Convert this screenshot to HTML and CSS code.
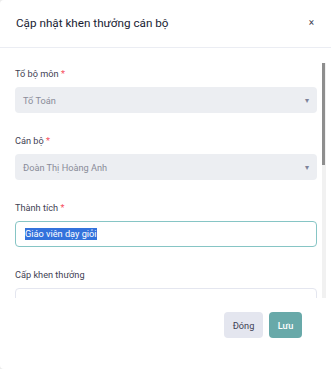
FILE: index.html
```html
<!DOCTYPE html>
<html lang="vi">
<head>
<meta charset="utf-8">
<title>Cập nhật khen thưởng cán bộ</title>
<link rel="stylesheet" href="styles.css">
</head>
<body>
<div class="modal">
  <div class="modal-header">
    <h2 class="modal-title">Cập nhật khen thưởng cán bộ</h2>
    <span class="close">×</span>
  </div>
  <div class="modal-body">
    <div class="form-group">
      <label class="label">Tổ bộ môn <span class="req">*</span></label>
      <div class="select"><span>Tổ Toán</span><span class="caret">▾</span></div>
    </div>
    <div class="form-group">
      <label class="label">Cán bộ <span class="req">*</span></label>
      <div class="select"><span>Đoàn Thị Hoàng Anh</span><span class="caret">▾</span></div>
    </div>
    <div class="form-group">
      <label class="label">Thành tích <span class="req">*</span></label>
      <div class="input focus"><span class="sel">Giáo viên dạy giỏi</span></div>
    </div>
    <div class="form-group">
      <label class="label">Cấp khen thưởng</label>
      <div class="input"></div>
    </div>
  </div>
  <div class="scroll-track"><div class="scroll-thumb"></div></div>
  <div class="modal-footer">
    <button class="btn btn-light">Đóng</button>
    <button class="btn btn-primary">Lưu</button>
  </div>
</div>
</body>
</html>
```
FILE: styles.css
```css
* { box-sizing: border-box; }
html, body { margin: 0; padding: 0; }
body {
  background: #ececec;
  font-family: Roboto, "Liberation Sans", Arial, sans-serif;
  width: 331px;
  height: 369px;
  overflow: hidden;
}
.modal {
  position: relative;
  background: #fff;
  width: 331px;
  height: 369px;
  border-radius: 4px 0 0 4px;
  display: flex;
  flex-direction: column;
}
.modal-header {
  height: 48px;
  border-bottom: 1px solid #ebedf3;
  display: flex;
  align-items: center;
  justify-content: space-between;
  padding: 0 17px 1px 16px;
  flex: none;
}
.modal-title {
  margin: 0;
  font-size: 11.7px;
  font-weight: normal;
  color: #181c32;
}
.close {
  font-size: 10px;
  color: #3f4254;
  line-height: 1;
}
.modal-body {
  height: 250px;
  overflow: hidden;
  padding: 18px 14px 0 15px;
  flex: none;
}
.form-group { margin-bottom: 20px; }
.label {
  display: block;
  font-size: 9.2px;
  line-height: 15px;
  color: #3f4254;
  margin-bottom: 6px;
}
.req { color: #f64e60; }
.select {
  height: 26px;
  border-radius: 4px;
  background: #eceef2;
  display: flex;
  align-items: center;
  justify-content: space-between;
  padding: 0 8px;
  font-size: 9.2px;
  color: #8a8c99;
}
.caret { font-size: 8px; color: #7e8299; }
.input {
  height: 26px;
  border: 1px solid #e4e6ef;
  border-radius: 4px;
  padding: 0 9px;
  display: flex;
  align-items: center;
  font-size: 9.2px;
  color: #3f4254;
}
.input.focus { border-color: #86c5c5; }
.sel {
  background: #3372dc;
  color: #fff;
  line-height: 12px;
}
.scroll-track {
  position: absolute;
  left: 322px;
  top: 63px;
  width: 4px;
  height: 235px;
  background: #f1f1f1;
}
.scroll-thumb {
  width: 3px;
  height: 102px;
  background: #8e8e8e;
}
.modal-footer {
  display: flex;
  justify-content: flex-end;
  gap: 6px;
  padding: 14px 29px 0 0;
}
.btn {
  height: 26px;
  border: none;
  border-radius: 4px;
  font-family: inherit;
  font-size: 9.2px;
  padding: 0;
}
.btn-light { background: #e4e6ef; color: #3f4254; width: 39px; }
.btn-primary { background: #68a9a9; color: #fff; font-weight: 500; width: 33px; }
```
